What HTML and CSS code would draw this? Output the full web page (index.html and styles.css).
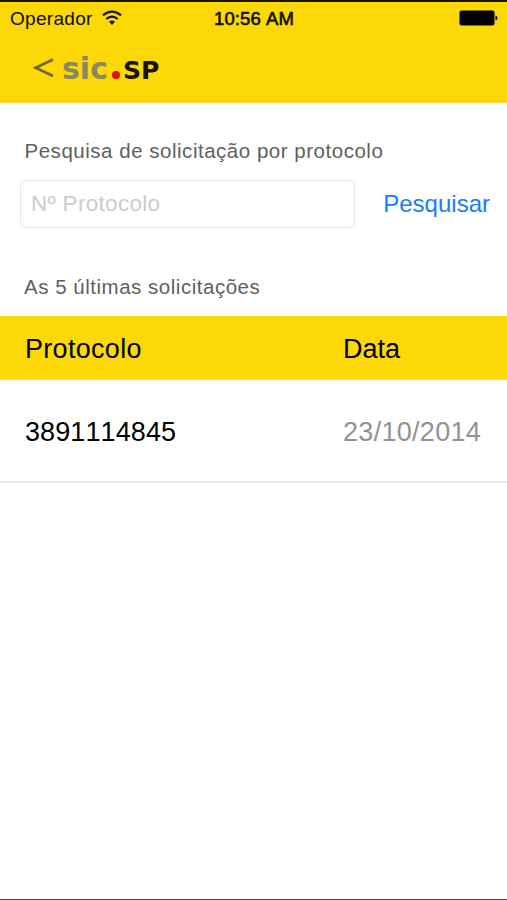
FILE: index.html
```html
<!DOCTYPE html>
<html lang="pt-BR">
<head>
    <meta charset="UTF-8">
    <meta name="viewport" content="width=device-width, initial-scale=1.0">
    <title>sic.SP</title>
    <link rel="stylesheet" href="styles.css">
</head>
<body>
    <div class="screen">
        <header class="top">
            <div class="status-bar">
                <div class="carrier">
                    <span class="carrier-name">Operador</span>
                    <svg class="wifi" width="20" height="16" viewBox="0 0 20 16">
                        <path d="M1 5.4Q10 -2 19 5.4M4.3 9Q10 4.2 15.7 9" fill="none" stroke="#100f00" stroke-width="2.2"/>
                        <path d="M7.1 11.8Q10 9.4 12.9 11.8L10 15Z" fill="#100f00"/>
                    </svg>
                </div>
                <span class="clock">10:56 AM</span>
                <svg class="battery" width="39" height="16" viewBox="0 0 39 16">
                    <rect x=".5" y=".5" width="35" height="15" rx="2" fill="#000"/>
                    <path d="M36.5 5.5Q38.5 6 38.5 8T36.5 10.5Z" fill="#000"/>
                </svg>
            </div>
            <div class="nav">
                <svg class="back" width="21" height="20" viewBox="0 0 21 20">
                    <path d="M20 1.5L2.5 9.7L20 18" fill="none" stroke="#6f6937" stroke-width="2.6"/>
                </svg>
                <div class="logo"><span class="logo-sic">sic</span><span class="logo-dot"></span><span class="logo-sp">SP</span></div>
            </div>
        </header>

        <main>
            <form class="search">
                <label class="label" for="protocolo">Pesquisa de solicitação por protocolo</label>
                <div class="search-row">
                    <input type="text" class="search-box" id="protocolo" placeholder="Nº Protocolo">
                    <button type="button" class="search-button">Pesquisar</button>
                </div>
            </form>

            <h2 class="label list-title">As 5 últimas solicitações</h2>
            <div class="row row-head">
                <span>Protocolo</span>
                <span class="head-date">Data</span>
            </div>
            <div class="row row-item">
                <span class="number">3891114845</span>
                <span class="date">23/10/2014</span>
            </div>
        </main>
    </div>
</body>
</html>
```
FILE: styles.css
```css
* {
    box-sizing: border-box;
}
body {
    margin: 0;
    font-family: "Liberation Sans", Arial, sans-serif;
    background-color: #fff;
    color: #000;
}
.screen {
    height: 900px;
    border-top: 2px solid #171500;
    border-bottom: 1px solid #444;
    overflow: hidden;
}
.top {
    height: 101px;
    background-color: #fbd806;
    border-bottom: 1px solid #efd547;
}
.status-bar {
    display: grid;
    grid-template-columns: 1fr auto 1fr;
    align-items: center;
    height: 33px;
    padding: 0 9px 0 10px;
    color: #100f00;
}
.carrier {
    display: flex;
    align-items: center;
    gap: 9px;
}
.carrier-name {
    font-size: 19px;
    letter-spacing: 0.3px;
}
.wifi {
    margin-bottom: 2px;
}
.clock {
    font-size: 18.5px;
    font-kerning: none;
    letter-spacing: 0.1px;
    -webkit-text-stroke: 0.6px #100f00;
}
.battery {
    justify-self: end;
    margin-bottom: 1px;
}
.nav {
    display: flex;
    align-items: center;
    height: 66px;
    padding-left: 33px;
}
.logo {
    display: flex;
    align-items: baseline;
    margin-top: 3px;
    margin-left: 8px;
    font-family: "DejaVu Sans", Verdana, sans-serif;
    font-weight: bold;
    line-height: 36px;
}
.logo-sic {
    font-size: 30px;
    color: #8b8763;
}
.logo-dot {
    width: 8px;
    height: 8px;
    margin: 0 3px 0 4px;
    border-radius: 50%;
    background-color: #e6091b;
}
.logo-sp {
    font-size: 25px;
    color: #151400;
}
.search {
    padding: 36px 17px 0 20px;
}
.label {
    display: block;
    margin: 0;
    padding-left: 4.5px;
    font-size: 20.5px;
    font-weight: normal;
    line-height: 24px;
    letter-spacing: 0.52px;
    color: #606060;
}
.search-row {
    display: flex;
    align-items: center;
    justify-content: space-between;
    margin-top: 17px;
}
.search-box {
    width: 335px;
    height: 48px;
    padding: 0 10px;
    border: 1px solid #e8e8e8;
    border-radius: 7px;
    background: #fff;
    font-family: inherit;
    font-size: 22.5px;
    letter-spacing: 0.3px;
    outline: none;
}
.search-box::placeholder {
    color: #ccc;
}
.search-button {
    padding: 0;
    border: none;
    background: none;
    font-family: inherit;
    font-size: 24px;
    color: #157efb;
}
.list-title {
    margin-top: 47px;
    padding-left: 24px;
}
.row {
    display: grid;
    grid-template-columns: 318px 1fr;
    align-items: center;
    padding-left: 25px;
    font-size: 27px;
    font-kerning: none;
}
.row-head {
    height: 64px;
    margin-top: 17px;
    padding-top: 4px;
    background-color: #fbd806;
    border-bottom: 1px solid #e9d778;
    letter-spacing: 0.3px;
}
.head-date {
    letter-spacing: 0;
}
.row-item {
    height: 103px;
    padding-top: 4px;
    border-bottom: 2px solid #e6e6e6;
}
.number {
    letter-spacing: 0.1px;
}
.date {
    color: #929292;
    letter-spacing: 0.3px;
}
```
